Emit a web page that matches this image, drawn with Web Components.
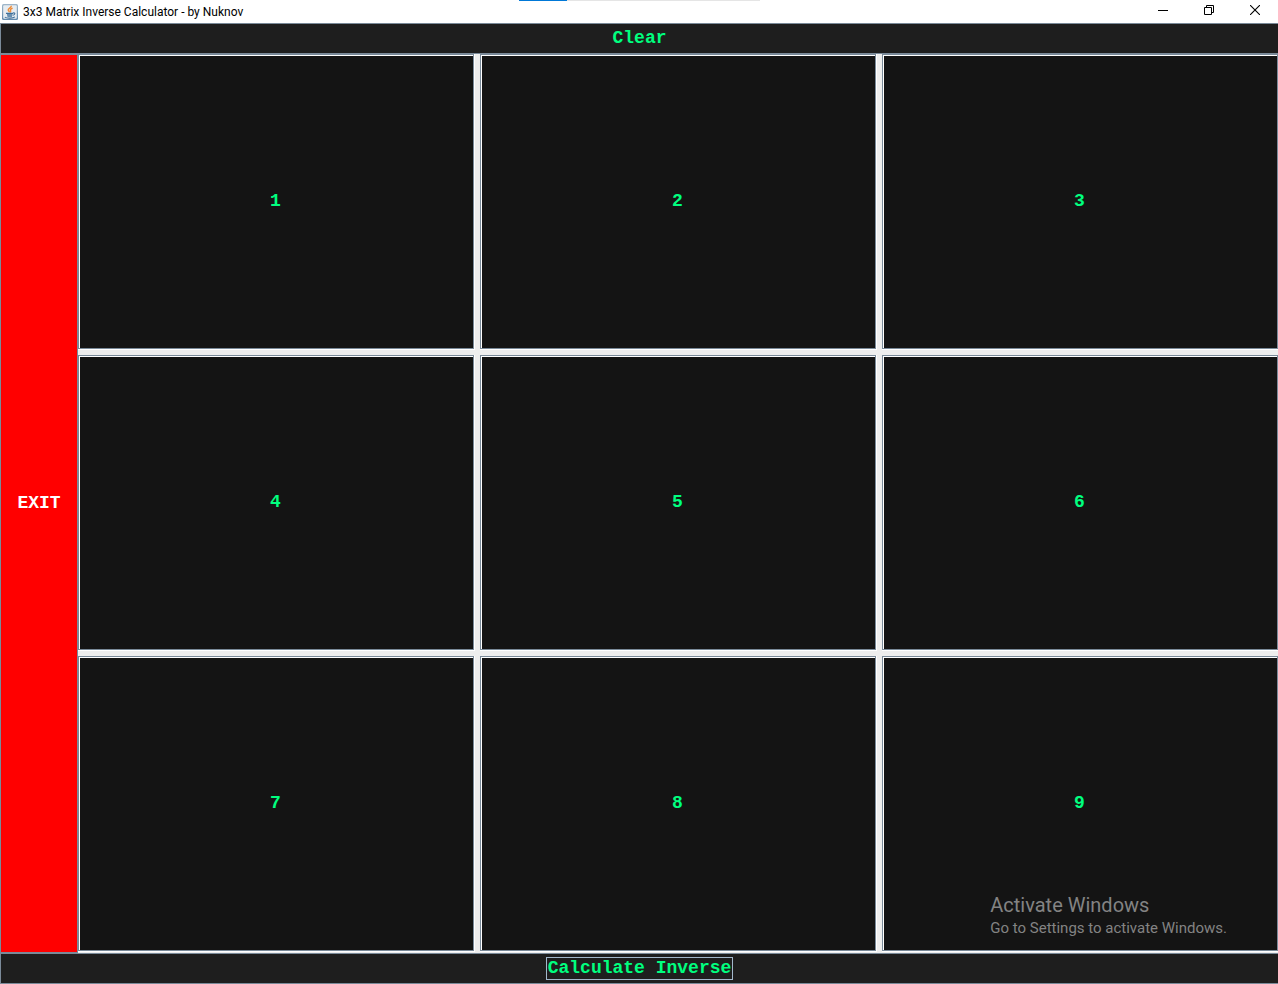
<!DOCTYPE html>
<html lang="en">
<head>
<meta charset="utf-8">
<title>3x3 Matrix Inverse Calculator - by Nuknov</title>
<style>
  html, body { margin: 0; overflow: hidden; background: #eee; }
</style>
</head>
<body>
<matrix-app></matrix-app>

<template id="t-app">
  <style>
    :host {
      --line: #7a8a99;
      --green: #00ff7f;
      --bar: #1e1e1e;
      display: grid;
      grid-template-rows: 23px auto 1fr auto;
      min-height: 100vh;
      margin-right: -1px;
      background: #eee;
      font: bold 18px/21px "Liberation Mono", monospace;
      position: relative;
    }
    main { display: grid; grid-template-columns: 78px 1fr; }
    activation-note { position: absolute; right: 52px; bottom: 46px; }
  </style>
  <title-bar>3x3 Matrix Inverse Calculator - by Nuknov</title-bar>
  <bar-button>Clear</bar-button>
  <main>
    <bar-button class="exit" tone="danger">EXIT</bar-button>
    <matrix-grid></matrix-grid>
  </main>
  <bar-button focused>Calculate Inverse</bar-button>
  <activation-note>
    <span slot="heading">Activate Windows</span>
    Go to Settings to activate Windows.
  </activation-note>
</template>

<template id="t-title">
  <style>
    :host {
      display: flex; align-items: center; position: relative;
      background: #fff; color: #000; padding: 0 1px 0 2px;
      font: 12px/16px Roboto, sans-serif;
    }
    .logo { width: 16px; height: 16px; margin-right: 5px; }
    .name { flex: 1; white-space: nowrap; }
    button {
      width: 46px; height: 20px; padding: 0; border: 0; background: none;
      display: grid; place-items: center; align-self: flex-start;
    }
    button svg { display: block; }
    .progress {
      position: absolute; top: 0; left: 0; right: 0; margin: 0 auto;
      width: 241px; height: 1px;
      background: linear-gradient(to right, #0078d7 20%, #e5e5e5 20%);
    }
  </style>
  <svg class="logo" viewBox="0 0 16 16" aria-hidden="true">
    <defs><linearGradient id="g" x1="0" y1="0" x2="0" y2="1">
      <stop offset="0" stop-color="#9fb6c9"/><stop offset="1" stop-color="#5f89ad"/>
    </linearGradient></defs>
    <rect width="16" height="16" rx="1.5" fill="url(#g)"/>
    <rect x="1.2" y="1.2" width="13.6" height="13.6" rx="1" fill="#e6ecf1"/>
    <path d="M9.4 1.8C9.6 4 5.4 4.4 6.2 6.4L7.6 8.2M10.6 4.2C8.2 5.2 7.6 6 8.8 7L8.2 8.4" fill="none" stroke="#ee8a35" stroke-width="1.3"/>
    <path d="M4 9.4H11M5 10.9H10.4M11 9C13.6 8.4 13.2 10.9 10.8 11.3M5.4 12.3H10M2.8 13.1C5 14.5 11 14.4 13 12.9" fill="none" stroke="#3f709b" stroke-width="1.1"/>
  </svg>
  <span class="name"><slot></slot></span>
  <button aria-label="Minimize"><svg width="10" height="10" viewBox="0 0 10 10"><path d="M0 5.5H10" stroke="#000"/></svg></button>
  <button aria-label="Restore"><svg width="10" height="10" viewBox="0 0 10 10"><path d="M.5 2.5H7.5V9.5H.5ZM2.5 2.5V.5H9.5V7.5H7.5" fill="none" stroke="#000"/></svg></button>
  <button aria-label="Close"><svg width="10" height="10" viewBox="0 0 10 10"><path d="M0 0L10 10M10 0L0 10" stroke="#000" stroke-width="1.1"/></svg></button>
  <div class="progress"></div>
</template>

<template id="t-button">
  <style>
    :host { display: grid; }
    button {
      box-sizing: border-box; min-height: 31px; padding: 3px 0; margin: 0;
      border: 1px solid var(--line); border-radius: 0;
      background: var(--bar); color: var(--green); font: inherit;
      display: grid; place-items: center; outline: none;
    }
    :host([tone="danger"]) button { background: #f00; color: #fff; }
    span { display: block; border: 1px solid transparent; }
    :host([focused]) span { border-color: #a3b8cc; padding: 0 1px; }
  </style>
  <button type="button"><span><slot></slot></span></button>
</template>

<template id="t-grid">
  <style>
    :host {
      display: grid; gap: 5px; padding-bottom: 1px;
      grid-template: repeat(3, 1fr) / repeat(3, 1fr);
    }
  </style>
</template>

<template id="t-cell">
  <style>
    :host {
      display: grid; min-width: 0;
      border: solid #fff; border-width: 0 1px 1px 0;
    }
    .edge { display: grid; border: 1px solid var(--line); }
    input {
      box-sizing: border-box; width: 100%; height: 100%; min-width: 0; margin: 0;
      border: solid #fff; border-width: 1px 0 0 1px; border-radius: 0;
      padding: 0 2px 2px 0; outline: none;
      background: #141414; color: var(--green); font: inherit; text-align: center;
    }
  </style>
  <div class="edge"><input type="text"></div>
</template>

<template id="t-note">
  <style>
    :host {
      display: block; pointer-events: none; color: #838383;
      font: 15px/20px Roboto, sans-serif; white-space: nowrap;
    }
    .heading { font-size: 20px; line-height: 26px; }
  </style>
  <div class="heading"><slot name="heading"></slot></div>
  <div><slot></slot></div>
</template>

<script>
  class Part extends HTMLElement {
    constructor() {
      super();
      const template = document.getElementById(this.constructor.template);
      this.attachShadow({ mode: "open" }).append(template.content.cloneNode(true));
    }
  }
  class TitleBar extends Part { static template = "t-title"; }
  class BarButton extends Part { static template = "t-button"; }
  class ActivationNote extends Part { static template = "t-note"; }
  class MatrixCell extends Part {
    static template = "t-cell";
    connectedCallback() {
      const input = this.shadowRoot.querySelector("input");
      input.value = this.getAttribute("value");
      input.setAttribute("aria-label", this.getAttribute("label"));
    }
  }
  class MatrixGrid extends Part {
    static template = "t-grid";
    connectedCallback() {
      for (let i = 0; i < 9; i++) {
        const cell = document.createElement("matrix-cell");
        cell.setAttribute("value", i + 1);
        cell.setAttribute("label", `Row ${Math.floor(i / 3) + 1}, column ${i % 3 + 1}`);
        this.shadowRoot.append(cell);
      }
    }
  }
  class MatrixApp extends Part { static template = "t-app"; }

  customElements.define("title-bar", TitleBar);
  customElements.define("bar-button", BarButton);
  customElements.define("activation-note", ActivationNote);
  customElements.define("matrix-cell", MatrixCell);
  customElements.define("matrix-grid", MatrixGrid);
  customElements.define("matrix-app", MatrixApp);
</script>
</body>
</html>
